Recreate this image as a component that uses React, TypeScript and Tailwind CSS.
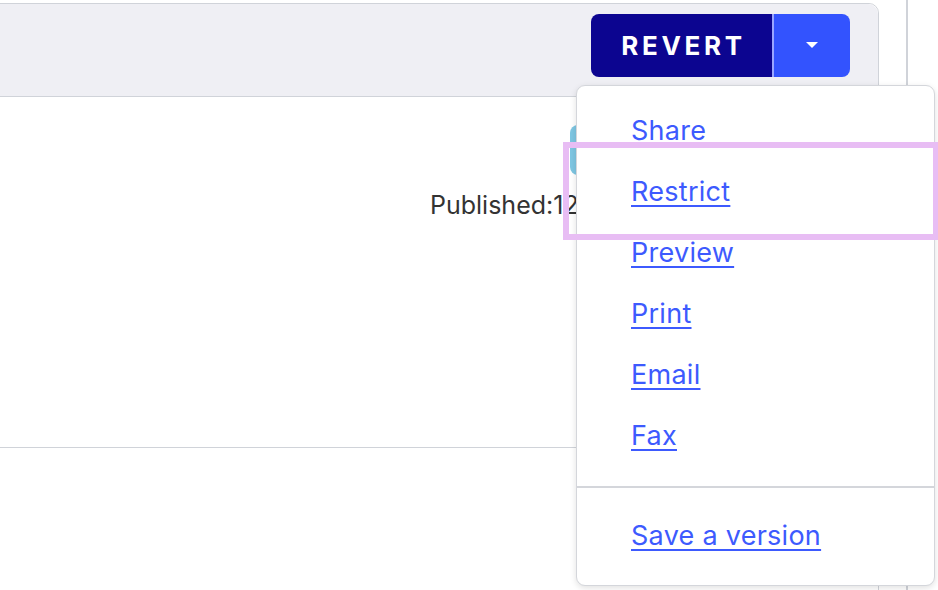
import React from "react";

const items = ["Share", "Restrict", "Preview", "Print", "Email", "Fax"];

export default function App() {
  return (
    <div
      className="relative w-[938px] h-[590px] overflow-hidden bg-white"
      style={{ fontFamily: "Inter, 'Noto Sans', sans-serif" }}
    >
      <div className="flex h-full">
        {/* main card */}
        <div className="ml-[-10px] mt-[3px] w-[889px] h-[700px] border-[1.5px] border-[#d0d3d9] rounded-tr-[10px] flex flex-col">
          <div className="h-[93px] bg-[#efeff4] border-b-[1.5px] border-[#d0d3d9] rounded-tr-[10px] flex justify-end pr-[28px] pt-[10px]">
            <div className="flex h-[63px] rounded-[8px] overflow-hidden">
              <button className="w-[181px] bg-[#0c0590] text-white text-[26px] font-bold tracking-[0.14em] pl-[4px] flex items-center justify-center">
                REVERT
              </button>
              <div className="w-[2px] bg-[#9aa6ff]" />
              <button className="w-[76px] bg-[#3353fe] flex items-center justify-center">
                <svg width="12" height="7" viewBox="0 0 12 7">
                  <path d="M0 0 L12 0 L6 6 Z" fill="white" />
                </svg>
              </button>
            </div>
          </div>
          <div className="h-[351px] border-b-[1.5px] border-[#d0d3d9] flex flex-col">
            <div className="flex justify-end pr-[248px] pt-[28px]">
              <div className="w-[60px] h-[50px] rounded-[8px] bg-[#7ec6e2]" />
            </div>
            <div className="ml-[439px] mt-[12px] text-[25px] text-[#333333] whitespace-nowrap">
              Published:12/05/2024
            </div>
          </div>
        </div>
        {/* vertical line */}
        <div className="ml-[27px] w-[1.5px] h-full bg-[#d0d3d9]" />
      </div>

      {/* dropdown menu */}
      <div className="absolute left-[576px] top-[85px] w-[359px] h-[501px] bg-white rounded-[9px] border-[1.5px] border-[#d4d6db] shadow-[0_2px_6px_rgba(0,0,0,0.12)] flex flex-col">
        <div className="pt-[14px] flex flex-col">
          {items.map((t) => (
            <div key={t} className="h-[61px] flex items-center pl-[54px]">
              <span
                className={
                  "text-[27px] tracking-[0.01em] text-[#3d5afe] leading-none " +
                  (t === "Share" ? "" : "underline decoration-[1.5px] underline-offset-[4px]")
                }
              >
                {t}
              </span>
            </div>
          ))}
        </div>
        <div className="mt-[20px] h-[2px] bg-[#d4d6db]" />
        <div className="mt-[17px] h-[61px] flex items-center pl-[54px]">
          <span className="text-[27px] tracking-[0.01em] text-[#3d5afe] leading-none underline decoration-[1.5px] underline-offset-[4px]">
            Save a version
          </span>
        </div>
      </div>

      {/* highlight box */}
      <div className="absolute left-[563px] top-[142px] w-[376px] h-[98px] border-[6px] border-[#e8bdf4]" />
    </div>
  );
}
